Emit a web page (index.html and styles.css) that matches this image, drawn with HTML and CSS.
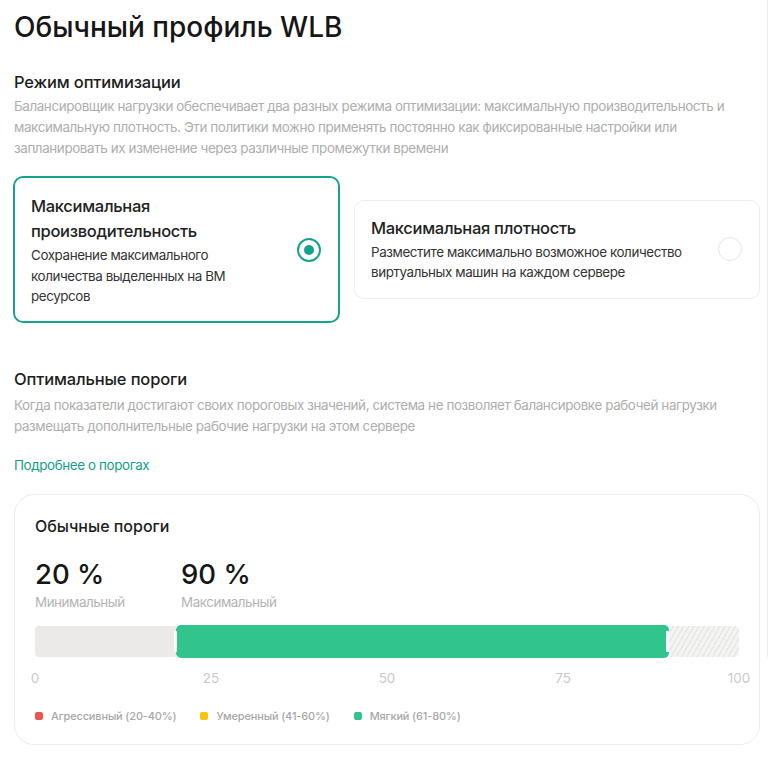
FILE: index.html
```html
<!DOCTYPE html>
<html lang="ru">
<head>
<meta charset="utf-8">
<title>Обычный профиль WLB</title>
<link rel="stylesheet" href="styles.css">
</head>
<body>
<div class="page">
  <main class="main">
    <h1 class="title">Обычный профиль WLB</h1>

    <section class="section">
      <h2 class="section-title">Режим оптимизации</h2>
      <p class="section-desc">Балансировщик нагрузки обеспечивает два разных режима оптимизации: максимальную производительность и максимальную плотность. Эти политики можно применять постоянно как фиксированные настройки или запланировать их изменение через различные промежутки времени</p>

      <div class="modes">
        <div class="mode mode-selected">
          <div class="mode-text">
            <div class="mode-title">Максимальная производительность</div>
            <div class="mode-desc">Сохранение максимального количества выделенных на ВМ ресурсов</div>
          </div>
          <span class="radio radio-on"></span>
        </div>
        <div class="mode mode-plain">
          <div class="mode-text">
            <div class="mode-title">Максимальная плотность</div>
            <div class="mode-desc">Разместите максимально возможное количество виртуальных машин на каждом сервере</div>
          </div>
          <span class="radio"></span>
        </div>
      </div>
    </section>

    <section class="section section-thresholds">
      <h2 class="section-title">Оптимальные пороги</h2>
      <p class="section-desc">Когда показатели достигают своих пороговых значений, система не позволяет балансировке рабочей нагрузки размещать дополнительные рабочие нагрузки на этом сервере</p>
      <a class="link" href="#">Подробнее о порогах</a>

      <div class="card">
        <div class="card-title">Обычные пороги</div>
        <div class="stats">
          <div class="stat">
            <div class="stat-value">20 %</div>
            <div class="stat-label">Минимальный</div>
          </div>
          <div class="stat">
            <div class="stat-value">90 %</div>
            <div class="stat-label">Максимальный</div>
          </div>
        </div>

        <div class="bar">
          <div class="bar-low" style="width: 20%"></div>
          <div class="bar-range" style="width: 70%"></div>
          <div class="bar-high" style="width: 10%"></div>
        </div>

        <div class="axis">
          <span class="tick"><span>0</span></span>
          <span class="tick"><span>25</span></span>
          <span class="tick"><span>50</span></span>
          <span class="tick"><span>75</span></span>
          <span class="tick"><span>100</span></span>
        </div>

        <div class="legend">
          <span class="legend-item"><i class="dot dot-red"></i>Агрессивный (20-40%)</span>
          <span class="legend-item"><i class="dot dot-yellow"></i>Умеренный (41-60%)</span>
          <span class="legend-item"><i class="dot dot-green"></i>Мягкий (61-80%)</span>
        </div>
      </div>
    </section>
  </main>
  <div class="edge"></div>
</div>
</body>
</html>
```

FILE: styles.css
```css
* { box-sizing: border-box; }

html, body {
  margin: 0;
  padding: 0;
  background: #ffffff;
}

body {
  font-family: Inter, "Noto Sans", "Liberation Sans", sans-serif;
  color: #1b1b1b;
}

.page {
  display: flex;
  align-items: flex-start;
  width: 768px;
}

.main {
  width: 767px;
  padding: 10px 7px 0 14px;
}

.edge {
  width: 1px;
  height: 657px;
  background: #ececec;
}

.title {
  margin: 0;
  font-size: 28px;
  line-height: 34px;
  font-weight: 500;
  letter-spacing: 0;
  color: #161616;
}

.section {
  margin-top: 26px;
}

.section-title {
  margin: 0;
  font-size: 16.5px;
  line-height: 24px;
  font-weight: 500;
  letter-spacing: -0.15px;
  color: #1d1d1d;
}

.section-desc {
  margin: 2px 0 0;
  font-size: 13.4px;
  line-height: 21px;
  color: #adadad;
  letter-spacing: -0.38px;
}

.modes {
  display: flex;
  align-items: center;
  gap: 14px;
  margin-top: 17px;
  margin-left: -1px;
}

.mode {
  display: flex;
  align-items: center;
  justify-content: space-between;
  border-radius: 10px;
  background: #fff;
}

.mode-selected {
  width: 327px;
  border: 2px solid #14a48b;
  padding: 16px 16px 14px 16px;
}

.mode-plain {
  flex: 1;
  border: 1px solid #ececec;
  padding: 15px 16px 15px 16px;
}

.mode-text {
  flex: 1;
}

.mode-selected .mode-text {
  max-width: 240px;
}

.mode-title {
  font-size: 16.5px;
  line-height: 25px;
  font-weight: 500;
  letter-spacing: -0.3px;
  color: #222;
}

.mode-desc {
  margin-top: 1px;
  font-size: 13.4px;
  line-height: 20.5px;
  color: #333;
  letter-spacing: -0.4px;
}

.radio {
  flex: none;
  width: 24px;
  height: 24px;
  border-radius: 50%;
  border: 1.5px solid #e6e6e6;
  background: #fff;
  display: flex;
  align-items: center;
  justify-content: center;
  margin-right: 1px;
}

.radio-on {
  border: 2px solid #14a48b;
}

.radio-on::after {
  content: "";
  width: 10px;
  height: 10px;
  border-radius: 50%;
  background: #14a48b;
}

.section-thresholds {
  margin-top: 44px;
}

.section-thresholds .section-desc {
  margin-top: 4px;
}

.link {
  display: block;
  margin-top: 18px;
  font-size: 13.4px;
  line-height: 20px;
  color: #13a088;
  text-decoration: none;
  letter-spacing: -0.38px;
}

.card {
  margin-top: 19px;
  border: 1px solid #ececec;
  border-radius: 20px;
  padding: 19px 20px 20px 20px;
}

.card-title {
  font-size: 16px;
  line-height: 24px;
  font-weight: 500;
  color: #1d1d1d;
}

.stats {
  display: grid;
  grid-template-columns: 146px auto;
  margin-top: 19px;
}

.stat-value {
  font-size: 27.5px;
  line-height: 34px;
  font-weight: 500;
  color: #151515;
}

.stat-label {
  margin-top: 1px;
  font-size: 13.4px;
  line-height: 20px;
  color: #b4b4b4;
  letter-spacing: -0.45px;
}

.bar {
  display: flex;
  align-items: center;
  height: 33px;
  margin-top: 13px;
}

.bar-low {
  height: 31px;
  background: #ebeae8;
  border-radius: 4px 0 0 4px;
}

.bar-range {
  position: relative;
  height: 33px;
  background: #32c48d;
  border-radius: 5px;
}

.bar-range::before,
.bar-range::after {
  content: "";
  position: absolute;
  top: 6px;
  bottom: 6px;
  width: 3px;
  background: #ffffff;
  border-radius: 1px;
}

.bar-range::before { left: -2px; }
.bar-range::after { right: 0; }

.bar-high {
  height: 31px;
  border-radius: 0 4px 4px 0;
  background: repeating-linear-gradient(120deg, #f4f4f3 0 3px, #e7e7e5 3px 4.5px);
}

.axis {
  display: flex;
  justify-content: space-between;
  margin-top: 10px;
  height: 20px;
}

.tick {
  width: 0;
  display: flex;
  justify-content: center;
}

.tick span {
  font-size: 13.4px;
  line-height: 20px;
  color: #c9c9c9;
  white-space: nowrap;
}

.legend {
  display: flex;
  gap: 24px;
  margin-top: 20px;
  height: 16px;
  align-items: center;
}

.legend-item {
  display: flex;
  align-items: center;
  font-size: 11px;
  line-height: 16px;
  font-weight: 500;
  letter-spacing: -0.15px;
  color: #a7a7a7;
}

.dot {
  width: 8px;
  height: 8px;
  border-radius: 2px;
  margin-right: 8px;
}

.dot-red { background: #ee5352; }
.dot-yellow { background: #f6c40f; }
.dot-green { background: #32c48d; }
```
